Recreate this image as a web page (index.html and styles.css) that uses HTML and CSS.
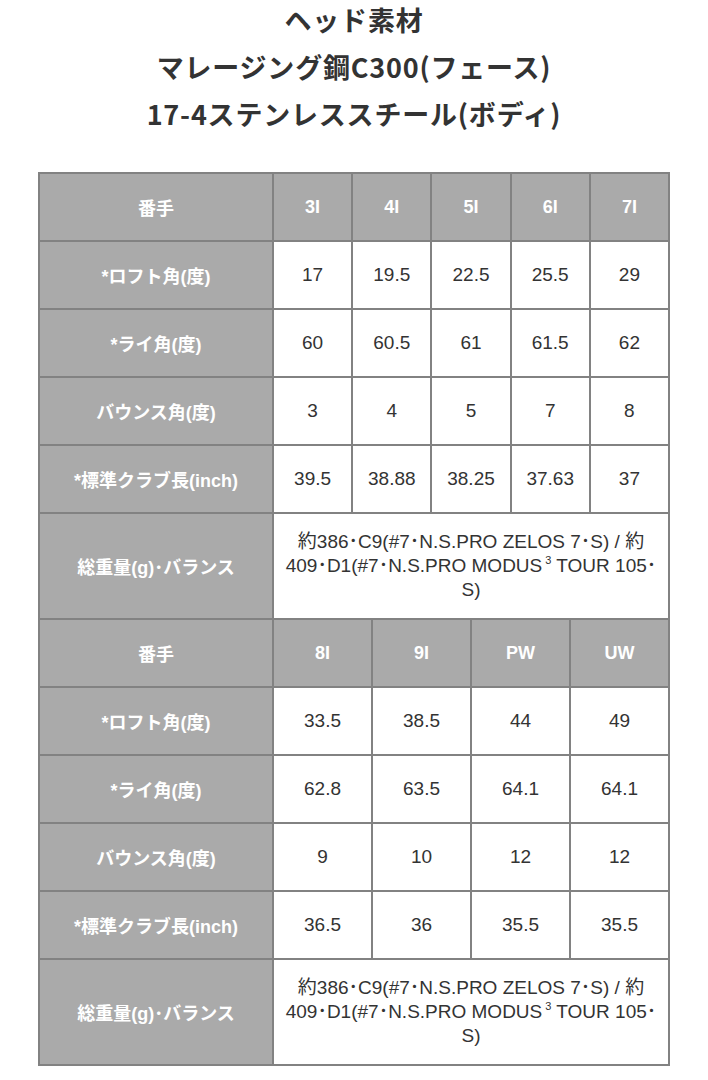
FILE: index.html
```html
<!DOCTYPE html>
<html lang="ja">
<head>
<meta charset="utf-8">
<link rel="stylesheet" href="styles.css">
</head>
<body>
<div class="title">
  <p>ヘッド素材</p>
  <p>マレージング鋼C300(フェース)</p>
  <p>17-4ステンレススチール(ボディ)</p>
</div>
<div class="spec">
  <div class="grid five">
    <div class="th">番手</div><div class="th">3I</div><div class="th">4I</div><div class="th">5I</div><div class="th">6I</div><div class="th">7I</div>
    <div class="th">*ロフト角(度)</div><div class="td">17</div><div class="td">19.5</div><div class="td">22.5</div><div class="td">25.5</div><div class="td">29</div>
    <div class="th">*ライ角(度)</div><div class="td">60</div><div class="td">60.5</div><div class="td">61</div><div class="td">61.5</div><div class="td">62</div>
    <div class="th">バウンス角(度)</div><div class="td">3</div><div class="td">4</div><div class="td">5</div><div class="td">7</div><div class="td">8</div>
    <div class="th">*標準クラブ長(inch)</div><div class="td">39.5</div><div class="td">38.88</div><div class="td">38.25</div><div class="td">37.63</div><div class="td">37</div>
    <div class="th tall">総重量(g)･バランス</div><div class="td tall span"><p class="note">約386･C9(#7･N.S.PRO ZELOS 7･S) / 約<br>409･D1(#7･N.S.PRO MODUS<sup>3</sup> TOUR 105･<br>S)</p></div>
  </div>
  <div class="grid four">
    <div class="th">番手</div><div class="th">8I</div><div class="th">9I</div><div class="th">PW</div><div class="th">UW</div>
    <div class="th">*ロフト角(度)</div><div class="td">33.5</div><div class="td">38.5</div><div class="td">44</div><div class="td">49</div>
    <div class="th">*ライ角(度)</div><div class="td">62.8</div><div class="td">63.5</div><div class="td">64.1</div><div class="td">64.1</div>
    <div class="th">バウンス角(度)</div><div class="td">9</div><div class="td">10</div><div class="td">12</div><div class="td">12</div>
    <div class="th">*標準クラブ長(inch)</div><div class="td">36.5</div><div class="td">36</div><div class="td">35.5</div><div class="td">35.5</div>
    <div class="th tall">総重量(g)･バランス</div><div class="td tall span"><p class="note">約386･C9(#7･N.S.PRO ZELOS 7･S) / 約<br>409･D1(#7･N.S.PRO MODUS<sup>3</sup> TOUR 105･<br>S)</p></div>
  </div>
</div>
</body>
</html>
```
FILE: styles.css
```css
html, body {
  margin: 0;
  padding: 0;
  background: #ffffff;
}
body {
  font-family: "Liberation Sans", "Noto Sans CJK JP", sans-serif;
  color: #333333;
}
.title {
  display: grid;
  row-gap: 12px;
  padding-top: 2px;
  text-align: center;
  font-family: "Noto Sans CJK JP", sans-serif;
  font-weight: 700;
  font-size: 27px;
  letter-spacing: 0.8px;
  line-height: 35px;
  color: #333333;
}
.title p {
  margin: 0;
}
.spec {
  margin: 41px 38px 0;
  width: 632px;
}
.grid {
  display: grid;
  gap: 2px;
  background: #828282;
  padding: 2px;
}
.grid.five {
  grid-template-columns: 232px repeat(5, 1fr);
}
.grid.four {
  grid-template-columns: 232px repeat(4, 1fr);
  padding-top: 0;
}
.th, .td {
  height: 66px;
  display: flex;
  align-items: center;
  justify-content: center;
  text-align: center;
}
.th {
  background: #aaaaaa;
  color: #ffffff;
  font-weight: 700;
  font-size: 18px;
}
.td {
  background: #ffffff;
  color: #333333;
  font-size: 19px;
}
.tall {
  height: 104px;
}
.span {
  grid-column: 2 / -1;
}
.note {
  margin: 0;
  line-height: 24px;
  white-space: nowrap;
}
sup {
  font-size: 11px;
  line-height: 0;
  vertical-align: 8px;
  margin-left: 3px;
}
```
